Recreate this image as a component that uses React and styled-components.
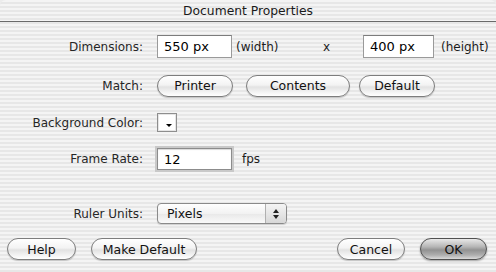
import React from "react";
import styled, { createGlobalStyle, css } from "styled-components";

const GlobalStyle = createGlobalStyle`
  html, body {
    margin: 0;
    padding: 0;
    background: #ececec;
  }
  * {
    box-sizing: border-box;
  }
`;

const stripes = css`
  background: repeating-linear-gradient(
    to bottom,
    #f4f4f4 0px,
    #f4f4f4 2px,
    #e7e7e7 2px,
    #e7e7e7 4px
  );
`;

const Window = styled.div`
  width: 496px;
  height: 272px;
  display: flex;
  flex-direction: column;
  font-family: "DejaVu Sans", "Liberation Sans", sans-serif;
  font-size: 12px;
  color: #111;
  border-radius: 6px 6px 0 0;
  overflow: hidden;
  ${stripes}
`;

const TitleBar = styled.div`
  height: 22px;
  display: flex;
  align-items: center;
  justify-content: center;
  font-size: 12.3px;
  color: #1a1a1a;
  border-bottom: 1px solid #6a6a6a;
`;

const Body = styled.div`
  flex: 1;
  display: flex;
  flex-direction: column;
  padding-top: 13px;
`;

const Row = styled.div`
  display: flex;
  align-items: center;
  height: ${(p) => p.$h}px;
  margin-top: ${(p) => p.$mt || 0}px;
`;

const Label = styled.div`
  width: 143px;
  text-align: right;
  margin-right: 14px;
  color: #262626;
`;

const TextBox = styled.div`
  width: ${(p) => p.$w}px;
  height: ${(p) => p.$h || 23}px;
  background: #fff;
  border: 1px solid #9a9a9a;
  border-top-color: #7c7c7c;
  display: flex;
  align-items: center;
  padding-left: 6px;
  font-size: 13px;
  color: #000;
  ${(p) =>
    p.$focus &&
    css`
      border: 1px solid #8c8c8c;
      box-shadow: 0 0 0 2px #c9c9c9, inset 0 1px 1px rgba(0, 0, 0, 0.15);
    `}
`;

const Unit = styled.span`
  display: inline-block;
  width: ${(p) => p.$w}px;
  margin-left: ${(p) => p.$ml || 0}px;
  color: #1c1c1c;
`;

const PillButton = styled.div`
  width: ${(p) => p.$w}px;
  height: 22px;
  margin-left: ${(p) => p.$ml || 0}px;
  border-radius: 11px;
  border: 1px solid #7d7d7d;
  display: flex;
  align-items: center;
  justify-content: center;
  color: #111;
  font-size: 12.5px;
  background: linear-gradient(
    to bottom,
    #ffffff 0%,
    #f3f3f3 45%,
    #e2e2e2 55%,
    #f6f6f6 85%,
    #ffffff 100%
  );
  box-shadow: 0 1px 1px rgba(0, 0, 0, 0.2);
  ${(p) =>
    p.$default &&
    css`
      border-color: #505050;
      background: linear-gradient(
        to bottom,
        #e8e8e8 0%,
        #b4b4b4 40%,
        #929292 55%,
        #aeaeae 80%,
        #dadada 100%
      );
      box-shadow: 0 1px 2px rgba(0, 0, 0, 0.35);
    `}
`;

const Swatch = styled.div`
  width: 20px;
  height: 19px;
  background: #fff;
  border: 1px solid #8e8e8e;
  box-shadow: inset 0 0 0 1px #e6e6e6;
  display: flex;
  align-items: flex-end;
  justify-content: flex-end;
  padding: 0 4px 4px 0;
`;

const Caret = styled.div`
  width: 0;
  height: 0;
  border-left: 3px solid transparent;
  border-right: 3px solid transparent;
  border-top: 3px solid #000;
`;

const Select = styled.div`
  width: 130px;
  height: 21px;
  border: 1px solid #8a8a8a;
  border-radius: 4px;
  display: flex;
  align-items: stretch;
  overflow: hidden;
  background: linear-gradient(to bottom, #ffffff 0%, #f2f2f2 50%, #e8e8e8 51%, #fafafa 100%);
  box-shadow: 0 1px 1px rgba(0, 0, 0, 0.15);
`;

const SelectText = styled.div`
  flex: 1;
  display: flex;
  align-items: center;
  padding-left: 9px;
  font-size: 12.5px;
  color: #111;
`;

const SelectArrows = styled.div`
  width: 21px;
  border-left: 1px solid #b0b0b0;
  display: flex;
  flex-direction: column;
  align-items: center;
  justify-content: center;
  gap: 2px;
  background: linear-gradient(to bottom, #f4f4f4, #d8d8d8);
`;

const Arrow = styled.div`
  width: 0;
  height: 0;
  border-left: 3px solid transparent;
  border-right: 3px solid transparent;
  ${(p) => (p.$up ? "border-bottom: 4px solid #222;" : "border-top: 4px solid #222;")}
`;

const Footer = styled.div`
  display: flex;
  align-items: center;
  height: 22px;
  margin-top: 14px;
  padding: 0 9px 0 7px;
`;

const Spacer = styled.div`
  flex: 1;
`;

export default function App() {
  return (
    <>
      <GlobalStyle />
      <Window>
        <TitleBar>Document Properties</TitleBar>
        <Body>
          <Row $h={23}>
            <Label>Dimensions:</Label>
            <TextBox $w={75}>550 px</TextBox>
            <Unit $ml={4} $w={87}>(width)</Unit>
            <Unit $w={40}>x</Unit>
            <TextBox $w={71}>400 px</TextBox>
            <Unit $ml={7} $w={50}>(height)</Unit>
          </Row>
          <Row $h={23} $mt={16}>
            <Label>Match:</Label>
            <PillButton $w={76}>Printer</PillButton>
            <PillButton $w={104} $ml={13}>Contents</PillButton>
            <PillButton $w={76} $ml={9}>Default</PillButton>
          </Row>
          <Row $h={19} $mt={16}>
            <Label>Background Color:</Label>
            <Swatch>
              <Caret />
            </Swatch>
          </Row>
          <Row $h={24} $mt={15}>
            <Label>Frame Rate:</Label>
            <TextBox $w={75} $h={22} $focus>12</TextBox>
            <Unit $ml={10} $w={40}>fps</Unit>
          </Row>
          <Row $h={21} $mt={32}>
            <Label>Ruler Units:</Label>
            <Select>
              <SelectText>Pixels</SelectText>
              <SelectArrows>
                <Arrow $up />
                <Arrow />
              </SelectArrows>
            </Select>
          </Row>
          <Footer>
            <PillButton $w={69}>Help</PillButton>
            <PillButton $w={106} $ml={15}>Make Default</PillButton>
            <Spacer />
            <PillButton $w={68}>Cancel</PillButton>
            <PillButton $w={67} $ml={15} $default>OK</PillButton>
          </Footer>
        </Body>
      </Window>
    </>
  );
}
